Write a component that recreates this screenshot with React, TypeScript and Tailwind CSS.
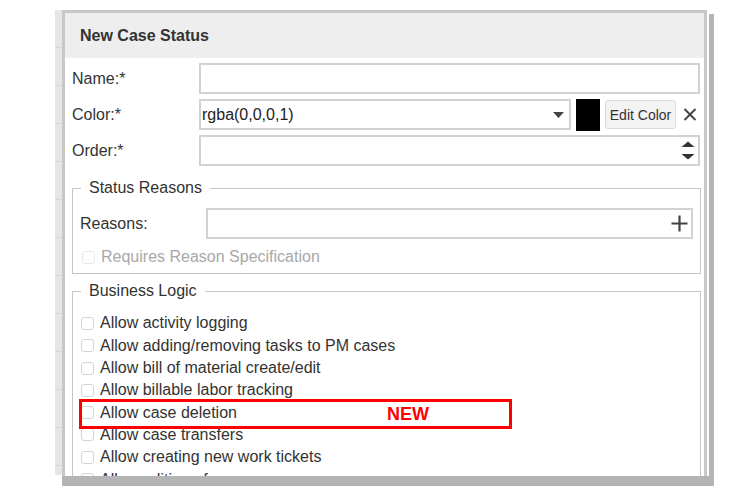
import React from "react";

// ─── Small pieces ───────────────────────────────────────
function Checkbox({ disabled }: { disabled?: boolean }) {
  return (
    <span
      className={
        "inline-block w-[13px] h-[13px] rounded-[3px] border bg-white shrink-0 " +
        (disabled ? "border-[#e8e8e8]" : "border-[#d4d4d4]")
      }
    />
  );
}

function CheckRow({ label, disabled }: { label: string; disabled?: boolean }) {
  return (
    <div className="flex items-center h-[22.3px] gap-[6px] whitespace-nowrap">
      <Checkbox disabled={disabled} />
      <span className={disabled ? "text-[#a8a8a8]" : "text-[#333]"}>{label}</span>
    </div>
  );
}

function Row({ label, children }: { label: string; children: React.ReactNode }) {
  return (
    <div className="flex items-center h-[31px] pl-[7px] pr-[4px]">
      <div className="w-[127px] shrink-0 text-[#333]">{label}</div>
      <div className="flex-1 flex items-center h-full min-w-0">{children}</div>
    </div>
  );
}

const businessLogic = [
  "Allow activity logging",
  "Allow adding/removing tasks to PM cases",
  "Allow bill of material create/edit",
  "Allow billable labor tracking",
  "Allow case deletion",
  "Allow case transfers",
  "Allow creating new work tickets",
  "Allow editing of case",
];

// ─── Dialog ─────────────────────────────────────────────
function Dialog() {
  return (
    <div className="flex flex-col w-[652px] h-[476px]">
      <div className="flex flex-1 min-h-0">
        <div className="flex-1 flex flex-col border-[3px] border-b-0 border-[#c8c8c8] bg-white overflow-hidden">
          <div className="h-[45px] shrink-0 bg-[#eeeeee] flex items-center pl-[15px] font-bold text-[#333]">
            New Case Status
          </div>

          <div className="flex flex-col gap-[5px] mt-[5px]">
            <Row label="Name:*">
              <div className="w-full h-full border-2 border-[#d2d2d2] bg-white" />
            </Row>
            <Row label="Color:*">
              <div className="flex-1 h-full border-2 border-[#d2d2d2] bg-white flex items-center pl-[1px] pr-[5px]">
                <span className="flex-1 text-[#222]">rgba(0,0,0,1)</span>
                <svg width="11" height="6" viewBox="0 0 11 6">
                  <path d="M0 0h11L5.5 6z" fill="#444" />
                </svg>
              </div>
              <div className="ml-[5px] w-[24px] h-[32px] bg-black" />
              <button className="ml-[5px] w-[71px] h-[29px] rounded-[3px] border border-[#dcdcdc] bg-[#f3f3f3] text-[14px] text-[#333]">
                Edit Color
              </button>
              <svg className="ml-[7px] mr-[3px]" width="14" height="13" viewBox="0 0 14 13">
                <path d="M1.5 1l11 11M12.5 1l-11 11" stroke="#444" strokeWidth="2" />
              </svg>
            </Row>
            <Row label="Order:*">
              <div className="w-full h-full border-2 border-[#d2d2d2] bg-white flex items-center justify-end pr-[3px]">
                <svg width="14" height="19" viewBox="0 0 14 19">
                  <path d="M0.5 6L7 0.5 13.5 6z" fill="#333" />
                  <path d="M0.5 13L7 18.5 13.5 13z" fill="#333" />
                </svg>
              </div>
            </Row>
          </div>

          <fieldset className="mt-[13px] ml-[7px] mr-[3px] border border-[#c6c6c6] px-[7px] pb-[5px]">
            <legend className="ml-[1px] px-[8px] leading-[18px] text-[#333]">Status Reasons</legend>
            <div className="flex items-center h-[31px] mt-[11px]">
              <div className="w-[126px] shrink-0 text-[#333]">Reasons:</div>
              <div className="flex-1 h-full border-2 border-[#d2d2d2] bg-white flex items-center justify-end pr-[3px]">
                <svg width="17" height="17" viewBox="0 0 17 17">
                  <path d="M8.5 0.5v16M0.5 8.5h16" stroke="#444" strokeWidth="2.2" />
                </svg>
              </div>
            </div>
            <div className="mt-[7px] pl-[2px]">
              <CheckRow label="Requires Reason Specification" disabled />
            </div>
          </fieldset>

          <fieldset className="mt-[8px] ml-[7px] mr-[3px] border border-[#c6c6c6] pl-[8px] pt-[12px] pb-[20px]">
            <legend className="px-[8px] leading-[18px] text-[#333]">Business Logic</legend>
            {businessLogic.map((item) => (
              <CheckRow key={item} label={item} />
            ))}
          </fieldset>
        </div>
        <div className="w-[2px] bg-white" />
        <div className="w-[5px] mt-[4px] bg-[#b4b4b4]" />
      </div>
      <div className="h-[10px] shrink-0 bg-[#b4b4b4]" />
    </div>
  );
}

export default function App() {
  return (
    <div className="relative w-[730px] h-[502px] bg-white overflow-hidden font-['Liberation_Sans',Arial,sans-serif] text-[16px] leading-[18px]">
      <div className="flex pt-[10px] pl-[55px]">
        <div className="w-[7px] h-[465px] bg-[#e6e6e6] flex flex-col">
          {Array.from({ length: 12 }).map((_, i) => (
            <div key={i} className="h-[38px] shrink-0 border-b border-[#d6d6d6]" />
          ))}
        </div>
        <Dialog />
      </div>

      {/* annotation overlay */}
      <div className="absolute left-[79px] top-[399px] w-[433px] h-[30px] border-[3px] border-[#f00] flex items-center">
        <span className="ml-[305px] font-bold text-[18px] text-[#f00]">NEW</span>
      </div>
    </div>
  );
}
